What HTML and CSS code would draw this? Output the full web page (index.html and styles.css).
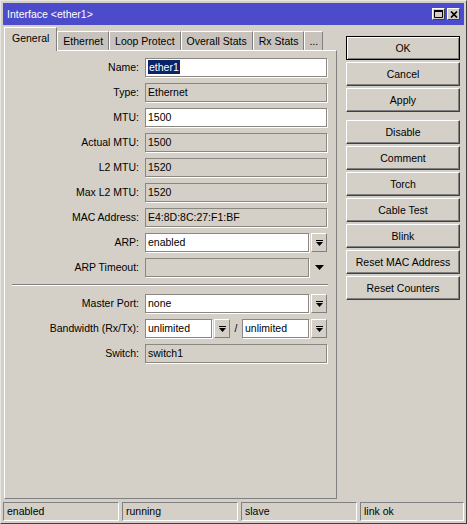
FILE: index.html
```html
<!DOCTYPE html>
<html lang="en">
<head>
  <meta charset="UTF-8">
  <title>Interface &lt;ether1&gt;</title>
  <link rel="stylesheet" href="styles.css">
</head>
<body>
  <div class="window">
    <div class="titlebar">
      <span class="title">Interface &lt;ether1&gt;</span>
      <div class="title-btns">
        <span class="tbtn">
          <svg width="9" height="8" viewBox="0 0 9 8"><path d="M0.5 0.5h8v7h-8z M0 1.5h9" fill="none" stroke="#000" stroke-width="1"/><rect x="0" y="0" width="9" height="2" fill="#000"/></svg>
        </span>
        <span class="tbtn">
          <svg width="8" height="7" viewBox="0 0 8 7"><path d="M1 0.5l6 6M7 0.5l-6 6" stroke="#000" stroke-width="1.7"/></svg>
        </span>
      </div>
    </div>

    <div class="body">
      <div class="left">
        <div class="tabs">
          <div class="tab active">General</div>
          <div class="tab">Ethernet</div>
          <div class="tab">Loop Protect</div>
          <div class="tab">Overall Stats</div>
          <div class="tab">Rx Stats</div>
          <div class="tab more">...</div>
        </div>

        <div class="panel">
          <div class="form">
            <div class="label">Name:</div>
            <div class="field edit"><span class="selected">ether1</span></div>

            <div class="label">Type:</div>
            <div class="field">Ethernet</div>

            <div class="label">MTU:</div>
            <div class="field edit">1500</div>

            <div class="label">Actual MTU:</div>
            <div class="field">1500</div>

            <div class="label">L2 MTU:</div>
            <div class="field">1520</div>

            <div class="label">Max L2 MTU:</div>
            <div class="field">1520</div>

            <div class="label">MAC Address:</div>
            <div class="field">E4:8D:8C:27:F1:BF</div>

            <div class="label">ARP:</div>
            <div class="combo">
              <div class="field edit">enabled</div>
              <div class="drop"><svg width="7" height="7" viewBox="0 0 7 7"><rect x="0" y="0" width="7" height="1"/><path d="M0 2h7l-3.5 4z"/></svg></div>
            </div>

            <div class="label">ARP Timeout:</div>
            <div class="combo">
              <div class="field"></div>
              <div class="arrow"><svg width="9" height="5" viewBox="0 0 9 5"><path d="M0 0h9l-4.5 5z"/></svg></div>
            </div>
          </div>

          <div class="sep"></div>

          <div class="form">
            <div class="label">Master Port:</div>
            <div class="combo">
              <div class="field edit">none</div>
              <div class="drop"><svg width="7" height="7" viewBox="0 0 7 7"><rect x="0" y="0" width="7" height="1"/><path d="M0 2h7l-3.5 4z"/></svg></div>
            </div>

            <div class="label">Bandwidth (Rx/Tx):</div>
            <div class="combo">
              <div class="field edit">unlimited</div>
              <div class="drop"><svg width="7" height="7" viewBox="0 0 7 7"><rect x="0" y="0" width="7" height="1"/><path d="M0 2h7l-3.5 4z"/></svg></div>
              <div class="slash">/</div>
              <div class="field edit">unlimited</div>
              <div class="drop"><svg width="7" height="7" viewBox="0 0 7 7"><rect x="0" y="0" width="7" height="1"/><path d="M0 2h7l-3.5 4z"/></svg></div>
            </div>

            <div class="label">Switch:</div>
            <div class="field">switch1</div>
          </div>
        </div>
      </div>

      <div class="actions">
        <div class="btn default">OK</div>
        <div class="btn">Cancel</div>
        <div class="btn">Apply</div>
        <div class="btn group">Disable</div>
        <div class="btn">Comment</div>
        <div class="btn">Torch</div>
        <div class="btn">Cable Test</div>
        <div class="btn">Blink</div>
        <div class="btn">Reset MAC Address</div>
        <div class="btn">Reset Counters</div>
      </div>
    </div>

    <div class="statusbar">
      <div class="cell">enabled</div>
      <div class="cell">running</div>
      <div class="cell">slave</div>
      <div class="cell">link ok</div>
    </div>
  </div>
</body>
</html>
```

FILE: styles.css
```css
* {
  box-sizing: border-box;
}
body {
  margin: 0;
  font-family: "Liberation Sans", Arial, sans-serif;
  font-size: 10.5px;
  color: #000;
  background: #d4d0c8;
}
.window {
  width: 467px;
  height: 524px;
  display: flex;
  flex-direction: column;
  padding: 2px;
  border: 1px solid;
  border-color: #e8e6e2 #404040 #404040 #e8e6e2;
  background: #d4d0c8;
}

/* title bar */
.titlebar {
  height: 22px;
  display: flex;
  align-items: center;
  justify-content: space-between;
  padding: 0 4px 0 4px;
  background: #4b4bcb;
  color: #fff;
}
.title-btns {
  display: flex;
  gap: 2px;
}
.tbtn {
  width: 13px;
  height: 12px;
  display: flex;
  align-items: center;
  justify-content: center;
  background: #d4d0c8;
  border: 1px solid;
  border-color: #fff #404040 #404040 #fff;
}

/* main area */
.body {
  flex: 1;
  display: flex;
  margin-top: 2px;
}
.left {
  width: 333px;
  margin-left: 1px;
  display: flex;
  flex-direction: column;
}
.tabs {
  height: 23px;
  display: flex;
  align-items: flex-end;
}
.tab {
  height: 19px;
  padding: 0 5px;
  line-height: 18px;
  background: #c8c4bd;
  border: 1px solid;
  border-bottom: none;
  border-color: #fff #808080 #808080 #fff;
}
.tab.active {
  height: 24px;
  padding: 0 7px;
  line-height: 20px;
  margin-bottom: -1px;
  background: #d4d0c8;
  position: relative;
  z-index: 1;
}
.tab.more {
  padding: 0 4px;
}
.panel {
  flex: 1;
  padding-top: 7px;
  border: 1px solid;
  border-color: #fff #808080 #808080 #fff;
}

/* form */
.form {
  display: grid;
  grid-template-columns: 134px 182px;
  grid-auto-rows: 19px;
  column-gap: 6px;
  row-gap: 6px;
}
.label {
  text-align: right;
  line-height: 19px;
  white-space: nowrap;
}
.field {
  padding-left: 2px;
  line-height: 17px;
  white-space: nowrap;
  overflow: hidden;
  background: #d4d0c8;
  border: 1px solid #8a8783;
  box-shadow: 1px 1px 0 #fff;
}
.field.edit {
  background: #fff;
}
.selected {
  display: inline-block;
  padding: 0 1px;
  line-height: 14px;
  background: #0a246a;
  color: #fff;
}
.combo {
  display: flex;
  gap: 2px;
}
.combo .field {
  flex: 1;
}
.drop {
  width: 16px;
  display: flex;
  align-items: center;
  justify-content: center;
  padding-top: 1px;
  background: #d4d0c8;
  border: 1px solid;
  border-color: #fff #808080 #808080 #fff;
}
.arrow {
  width: 16px;
  display: flex;
  align-items: center;
  justify-content: center;
}
.slash {
  width: 8px;
  text-align: center;
  line-height: 19px;
}
.sep {
  margin: 7px 8px 8px 7px;
  border-top: 1px solid #808080;
  border-bottom: 1px solid #fff;
}

/* buttons */
.actions {
  width: 114px;
  margin-left: 9px;
  padding-top: 9px;
  display: flex;
  flex-direction: column;
  gap: 2px;
}
.btn {
  height: 24px;
  line-height: 22px;
  text-align: center;
  white-space: nowrap;
  background: #d4d0c8;
  border: 1px solid;
  border-color: #fff #404040 #404040 #fff;
  box-shadow: inset -1px -1px 0 #808080;
}
.btn.default {
  border-color: #000;
  box-shadow: inset 1px 1px 0 #fff, inset -1px -1px 0 #808080;
}
.btn.group {
  margin-top: 6px;
}

/* status bar */
.statusbar {
  height: 19px;
  margin-top: 3px;
  display: grid;
  grid-template-columns: 116px 116px 116px 1fr;
  gap: 3px;
}
.cell {
  padding-left: 3px;
  line-height: 17px;
  border: 1px solid;
  border-color: #808080 #fff #fff #808080;
}
```
